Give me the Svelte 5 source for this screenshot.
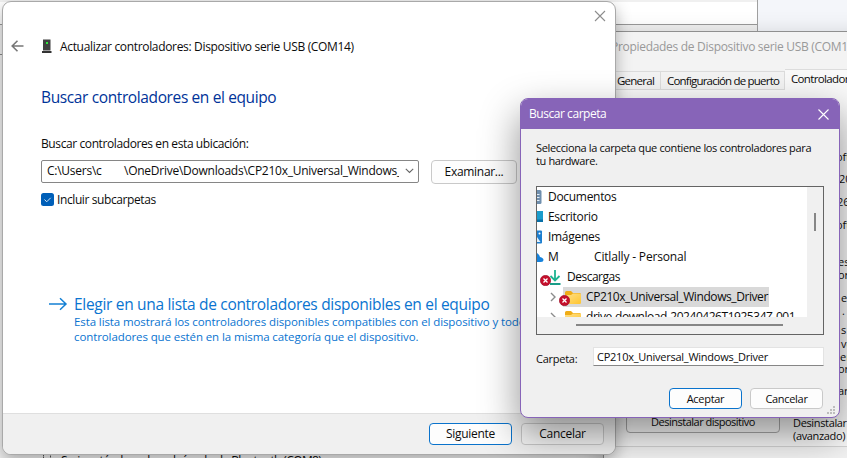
<script>
  const places = [
    { name: 'Documentos', icon: 'doc' },
    { name: 'Escritorio', icon: 'desk' },
    { name: 'Imágenes', icon: 'pics' },
  ];
  const fragments = [
    ['oft', 150, 836], ['20', 172, 839], ['26', 195, 837], ['oft', 218, 836], ['es', 255, 838], ['or', 268, 838],
    ['e', 291, 841], ['.', 304, 842], ['s', 323, 841], ['ve', 337, 841], ['er', 350, 840], ['or', 362, 838], ['ar', 384, 838],
  ];
</script>

{#snippet errorBadge()}
  <svg class="badge" width="11" height="11" viewBox="0 0 11 11">
    <circle cx="5.500" cy="5.500" r="5.200" fill="#c50f2b" stroke="#98102a" stroke-width=".6" />
    <path d="M3.500 3.500l4 4M7.500 3.500l-4 4" stroke="#fff" stroke-width="1.300" />
  </svg>
{/snippet}

{#snippet folder()}
  <svg class="folder" width="18" height="15" viewBox="0 0 18 15">
    <path d="M1 2.500Q1 1 2.500 1H7l2 2h7.500V8H1z" fill="#f0ac16" />
    <path d="M1 5h6l2-1.500h6.500Q17 3.500 17 5v7.500q0 1.500-1.500 1.500h-13Q1 14 1 12.500z" fill="url(#fold)" />
    <defs><linearGradient id="fold" x2="1" y2="1"><stop stop-color="#ffe08a" /><stop offset="1" stop-color="#ffc52e" /></linearGradient></defs>
  </svg>
{/snippet}

{#snippet chevron()}
  <svg class="chev" width="6" height="10" viewBox="0 0 6 10"><path d="M1 1l4 4-4 4" fill="none" stroke="#8c8c8c" stroke-width="1.400" /></svg>
{/snippet}

<main>
  <section class="manager">
    <div class="menu"></div>
    <div class="tools"></div>
    <div class="device">
      <svg width="10" height="8" viewBox="0 0 10 8"><path d="M1.500 4V.5h7V4" fill="none" stroke="#555" stroke-dasharray="1.500 .5" /><path d="M0 4h10v4H0z" fill="#444" /></svg>
      <span>Serie estándar sobre el vínculo de Bluetooth (COM8)</span>
    </div>
  </section>

  <section class="props">
    <div class="ptitle">Propiedades de Dispositivo serie USB (COM14)</div>
    <div class="tabs">
      <div class="tab t1">General</div>
      <div class="tab t2">Configuración de puerto</div>
      <div class="tab on">Controlador</div>
    </div>
    <div class="pane">
      <div class="uninstall">
        <div class="ubtn">Desinstalar dispositivo</div>
        <div class="udesc">Desinstalar<br />(avanzado)</div>
      </div>
    </div>
  </section>
  {#each fragments as [text, top, left]}
    <span class="frag" style="top:{top}px;left:{left}px">{text}</span>
  {/each}

  <section class="wizard">
    <svg class="wclose" width="12" height="12" viewBox="0 0 12 12"><path d="M1 1l10 10M11 1L1 11" stroke="#8d8d8d" stroke-width="1.100" /></svg>
    <header>
      <svg width="13" height="12" viewBox="0 0 13 12"><path d="M12.500 6H1M6.500 .8L1.200 6l5.300 5.200" fill="none" stroke="#777" stroke-width="1.600" /></svg>
      <svg class="dev" width="10" height="15" viewBox="0 0 10 15"><path d="M1 .5h7.500v11H1z" fill="#404040" /><path d="M0 12h9.500v2H0z" fill="#333" /><path d="M4 3h2v2H4z" fill="#2ee83c" /></svg>
      <span>Actualizar controladores: Dispositivo serie USB (COM14)</span>
    </header>
    <div class="body">
      <h1>Buscar controladores en el equipo</h1>
      <div class="label">Buscar controladores en esta ubicación:</div>
      <div class="pick">
        <div class="combo">
          <span class="path"><span class="user">C:\Users\c</span><span class="rest">\OneDrive\Downloads\CP210x_Universal_Windows_Driver</span></span>
          <svg width="9" height="6" viewBox="0 0 9 6"><path d="M.8 .8l3.700 3.700L8.200 .8" fill="none" stroke="#666" stroke-width="1.100" /></svg>
        </div>
        <div class="btn browse">Examinar...</div>
      </div>
      <div class="check">
        <svg width="13" height="13" viewBox="0 0 13 13"><rect width="13" height="13" rx="2.500" fill="#005fb8" /><path d="M3.500 6.500l2.200 2.300 4-4" fill="none" stroke="#d5e6f5" /></svg>
        <span>Incluir subcarpetas</span>
      </div>
      <div class="choice">
        <svg width="19" height="14" viewBox="0 0 19 14"><path d="M0 7h17M11 1.200L17 7l-6 5.800" fill="none" stroke="#1480d4" stroke-width="1.500" /></svg>
        <div>
          <div class="ctitle">Elegir en una lista de controladores disponibles en el equipo</div>
          <div class="ctext">Esta lista mostrará los controladores disponibles compatibles con el dispositivo y todos los</div>
          <div class="ctext">controladores que estén en la misma categoría que el dispositivo.</div>
        </div>
      </div>
    </div>
    <footer>
      <div class="btn primary">Siguiente</div>
      <div class="btn plain">Cancelar</div>
    </footer>
  </section>

  <section class="dialog">
    <div class="dtitle">
      <span>Buscar carpeta</span>
      <svg width="11" height="11" viewBox="0 0 11 11"><path d="M.5 .5l10 10M10.500 .5l-10 10" stroke="#fff" stroke-width="1.100" /></svg>
    </div>
    <div class="dbody">
      <p>Selecciona la carpeta que contiene los controladores para<br />tu hardware.</p>
      <div class="tree">
        <div class="rows">
          {#each places as p}
            <div class="row">
              <svg width="6" height="16" viewBox="0 0 6 16">
                {#if p.icon === 'doc'}
                  <path d="M0 1h3q1.500 0 1.500 1.500v11q0 1.500-1.500 1.500H0z" fill="#6f8fae" /><path d="M0 5.500h2.500M0 8.500h2.500M0 11.500h2.500" stroke="#e3edf6" />
                {:else if p.icon === 'desk'}
                  <path d="M0 2h6v11H0z" fill="#1a9ccc" /><path d="M0 10.500h6V13H0z" fill="#0870a8" />
                {:else}
                  <path d="M0 1.500h4q1 0 1 1v11q0 1-1 1H0z" fill="#1d7fd0" /><path d="M0 8l3.500 5H0z" fill="#e4f2fd" /><circle cx="2.500" cy="4.500" r="1" fill="#fff" />
                {/if}
              </svg>
              <span>{p.name}</span>
            </div>
          {/each}
          <div class="row">
            <svg width="7" height="16" viewBox="0 0 7 16"><path d="M0 4q2 1 3 4 3.500 1 3.500 3T4 13H0z" fill="#1783dc" /></svg>
            <span class="owner">M</span><span class="cit">Citlally - Personal</span>
          </div>
          <div class="row down">
            {@render errorBadge()}
            <svg width="12" height="17" viewBox="0 0 12 17"><path d="M6 1v10M1.500 7L6 11.500 10.500 7" fill="none" stroke="#1fb391" stroke-width="1.800" /><path d="M1 15h10.500" stroke="#1a9d88" stroke-width="2" /></svg>
            <span class="desc">Descargas</span>
          </div>
          <div class="row sub">
            {@render chevron()}
            <div class="picked">{@render folder()}<span>CP210x_Universal_Windows_Driver</span></div>
            {@render errorBadge()}
          </div>
          <div class="row sub">
            {@render chevron()}
            <div class="picked none">{@render folder()}<span>drive-download-20240426T192534Z-001</span></div>
          </div>
        </div>
        <div class="vbar"></div>
        <div class="hbar"></div>
      </div>
      <div class="field"><span class="flabel">Carpeta:</span><div class="input">CP210x_Universal_Windows_Driver</div></div>
      <div class="actions">
        <div class="btn primary">Aceptar</div>
        <div class="btn">Cancelar</div>
      </div>
    </div>
    <svg class="grip" width="9" height="9" viewBox="0 0 9 9"><path d="M6 0h2v2H6zM3 3h2v2H3zM6 3h2v2H6zM0 6h2v2H0zM3 6h2v2H3zM6 6h2v2H6z" fill="#bdbdbd" /></svg>
  </section>
</main>

<style>
  main { position: relative; width: 847px; height: 458px; overflow: hidden; background: #f4f6fa; font: 12px/16px "Open Sans", "Noto Sans", sans-serif; color: #0c0c0c; white-space: nowrap; }
  section, section :global(*) { box-sizing: border-box; }
  svg { display: block; flex: none; }
  .manager { position: absolute; left: -10px; top: 0; width: 768px; height: 470px; background: #f0f0f0; border-right: 1px solid #a0a0a0; padding-top: 2px; display: flex; flex-direction: column; }
  .menu { height: 23px; background: #fff; border-bottom: 1px solid #999; }
  .tools { height: 30px; border-bottom: 1px solid #888; }
  .device { margin-top: auto; height: 18px; display: flex; gap: 9px; padding-left: 52px; align-items: flex-start; }
  .device span { line-height: 17px; letter-spacing: -.62px; }
  .device svg { margin-top: 2px; }
  .props { position: absolute; left: 603px; top: 31px; width: 300px; height: 440px; background: #f3f3f3; border: 1px solid #8f8f8f; box-shadow: 0 8px 24px rgba(0,0,0,.25); display: flex; flex-direction: column; }
  .ptitle { height: 37px; padding: 7px 0 0 7px; color: #999; letter-spacing: -.3px; }
  .tabs { display: flex; align-items: flex-end; height: 21px; font-size: 11.500px; letter-spacing: -.65px; }
  .tab { height: 19px; border: 1px solid #dcdcdc; border-left: 0; line-height: 17px; padding-left: 6px; }
  .t1 { width: 57px; padding-left: 13px; letter-spacing: -.75px; }
  .t2 { width: 124px; letter-spacing: -.8px; }
  .on { width: 90px; height: 21px; background: #f9f9f9; border-bottom: 0; line-height: 18px; padding-left: 6px; }
  .pane { height: 357px; background: #f9f9f9; border-bottom: 1px solid #d5d5d5; display: flex; flex-direction: column; justify-content: flex-end; }
  .uninstall { display: flex; height: 36px; margin-bottom: -1px; font-size: 11px; letter-spacing: -.35px; align-items: flex-start; }
  .ubtn { width: 154px; height: 23px; margin: -1px 0 0 22px; border: 1px solid #aaa; border-radius: 4px; text-align: center; line-height: 22px; letter-spacing: -.5px; }
  .udesc { margin: 5px 0 0 13px; line-height: 13px; }
  .frag { position: absolute; font-size: 11px; line-height: 14px; }
  .wizard { position: absolute; left: 2px; top: 1px; width: 614px; height: 454px; border: 1px solid #a9a9a9; border-radius: 9px; background: #fff; box-shadow: 0 6px 16px rgba(0,0,0,.3); overflow: hidden; display: flex; flex-direction: column; }
  .wclose { position: absolute; left: 591px; top: 8px; }
  header { display: flex; height: 70px; padding: 37px 0 0 8px; }
  header > svg:first-child { margin-top: 1px; }
  .dev { margin: 0 8px 0 18px; }
  header span { letter-spacing: -.33px; }
  .body { height: 341px; padding-left: 38px; display: flex; flex-direction: column; }
  h1 { margin: 13px 0 0; font-size: 15.500px; font-weight: 400; line-height: 24px; color: #039; letter-spacing: -.38px; }
  .label { margin-top: 27px; letter-spacing: -.4px; }
  .pick { display: flex; margin-top: 8px; gap: 12px; height: 24px; }
  .combo { width: 378px; height: 23px; border: 1px solid #868686; border-radius: 2px; display: flex; align-items: center; padding: 0 4px 2px 5px; }
  .path { width: 353px; overflow: hidden; display: flex; margin-right: 6px; letter-spacing: -.25px; }
  .user { width: 77px; flex: none; }
  .btn { border: 1px solid #c9c9c9; border-radius: 4px; background: #fdfdfd; text-align: center; line-height: 20px; letter-spacing: -.3px; height: 22px; }
  .browse { width: 86px; height: 24px; line-height: 22px; }
  .check { display: flex; gap: 3px; margin-top: 7px; align-items: center; letter-spacing: -.4px; height: 16px; }
  .check span { padding-top: 1px; }
  .choice { display: flex; gap: 6px; margin: 85px 0 0 8px; color: #0a74d0; }
  .choice svg { margin-top: 5px; }
  .ctitle { font-size: 15.500px; line-height: 24px; letter-spacing: -.31px; margin-bottom: -2px; }
  .ctext { font-size: 11.500px; line-height: 15px; letter-spacing: -.1px; }
  footer { height: 41px; border-top: 1px solid #dfdfdf; background: #f0f0f0; display: flex; gap: 9px; padding: 9px 0 0 426px; }
  footer .btn { width: 83px; }
  .btn.primary { border-color: #0a73cc; }
  footer .plain { background: #f6f6f6; }
  .dialog { position: absolute; left: 520px; top: 98px; width: 320px; height: 320px; border: 1px solid #8764b8; border-radius: 8px; background: #f0f0f0; overflow: hidden; box-shadow: 0 16px 38px 1px rgba(0,0,0,.42); }
  .dtitle { height: 30px; background: #8764b8; color: #fff; display: flex; align-items: center; justify-content: space-between; padding: 0 10px 0 8px; letter-spacing: -.45px; }
  .dbody { padding: 12px 15px 0; }
  p { margin: 0; font-size: 11px; line-height: 13px; height: 45px; letter-spacing: -.36px; }
  .tree { position: relative; width: 288px; height: 149px; border: 1px solid #646464; }
  .rows { width: 270px; height: 130px; overflow: hidden; background: #fff; }
  .row { height: 20px; display: flex; align-items: center; letter-spacing: -.3px; }
  .row > svg + span { margin-left: 5px; }
  .row > .owner { margin-left: 4px; width: 46px; }
  .cit { letter-spacing: -.17px; }
  .down > .badge { margin: 7px 0 0 3px; }
  .down > :global(svg + svg) { margin: 0 6px 0 -2px; }
  .down > svg + .desc { margin-left: 0; letter-spacing: -.5px; }
  .sub { position: relative; }
  .chev { margin-left: 13px; }
  .picked { display: flex; align-items: center; gap: 4px; margin-left: 7px; height: 20px; background: #d9d9d9; width: 206px; padding-left: 1px; letter-spacing: -.42px; }
  .picked.none { background: none; width: auto; letter-spacing: -.46px; }
  .sub > .badge { position: absolute; left: 22px; top: 8px; }
  .vbar { position: absolute; left: 277px; top: 26px; width: 2px; height: 18px; background: #868686; }
  .hbar { position: absolute; left: 39px; top: 137px; width: 207px; height: 2px; background: #868686; }
  .field { display: flex; margin-top: 13px; align-items: center; height: 20px; font-size: 11px; letter-spacing: -.25px; }
  .flabel { width: 57px; padding-top: 2px; }
  .input { width: 231px; height: 19px; background: #fff; border: 1px solid #e3e3e3; border-bottom-color: #868686; line-height: 17px; padding-left: 3px; margin-top: -3px; }
  .actions { display: flex; justify-content: flex-end; gap: 8px; margin: 20px 1px 0 0; font-size: 11px; }
  .actions .btn { width: 73px; height: 21px; line-height: 20px; }
  .grip { position: absolute; right: 3px; bottom: 2px; }
</style>
